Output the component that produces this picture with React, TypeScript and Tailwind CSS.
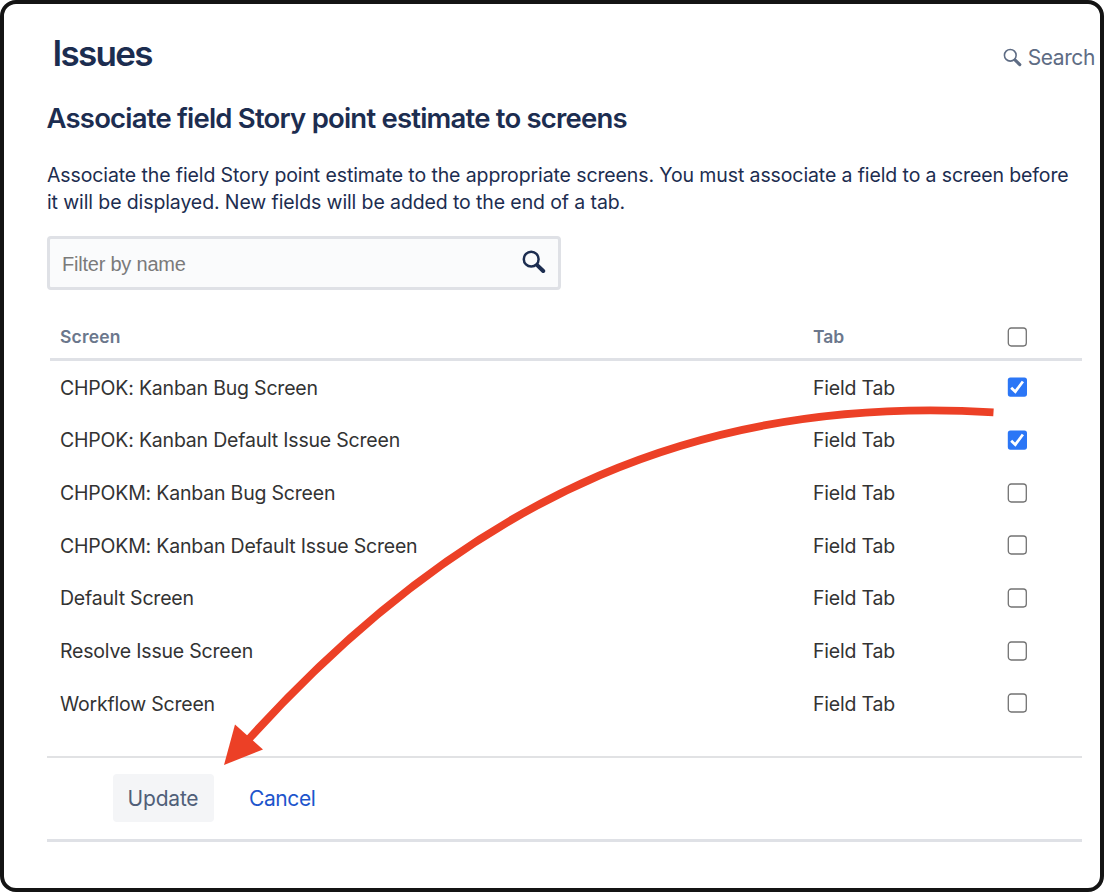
import { useState } from "react";

const rows = [
  { screen: "CHPOK: Kanban Bug Screen", checked: true },
  { screen: "CHPOK: Kanban Default Issue Screen", checked: true },
  { screen: "CHPOKM: Kanban Bug Screen", checked: false },
  { screen: "CHPOKM: Kanban Default Issue Screen", checked: false },
  { screen: "Default Screen", checked: false },
  { screen: "Resolve Issue Screen", checked: false },
  { screen: "Workflow Screen", checked: false },
];

function Checkbox({ checked, onChange, label }: { checked: boolean; onChange: () => void; label: string }) {
  return (
    <button type="button" role="checkbox" aria-checked={checked} aria-label={label} onClick={onChange} className="block h-5 w-5">
      <svg viewBox="0 0 20 20" className="h-5 w-5">
        {checked ? (
          <>
            <rect x="0.8" y="0.5" width="19.2" height="19.2" rx="2.6" fill="#2b76f6" />
            <path d="M4.2 10.7 8.300 14.700 15.900 4.500" fill="none" stroke="#fff" strokeWidth="2.8" />
          </>
        ) : (
          <rect x="1.3" y="1" width="18" height="18" rx="2.9" fill="#fff" stroke="#737373" strokeWidth="1.3" />
        )}
      </svg>
    </button>
  );
}

function Magnifier({ className, ring }: { className: string; ring: number }) {
  return (
    <svg viewBox="0 0 24 24" className={className} fill="none" stroke="currentColor">
      <circle cx="9.2" cy="9.2" r="7.4" strokeWidth={ring} />
      <path d="M15.4 15.4 21.2 21" strokeWidth="4" strokeLinecap="round" />
    </svg>
  );
}

export default function App() {
  const [state, setState] = useState(rows.map((r) => r.checked));
  const all = state.every(Boolean);
  const toggle = (i: number) => setState(state.map((v, k) => (k === i ? !v : v)));

  return (
    <div className="relative h-[892px] w-[1104px] overflow-hidden rounded-2xl border-4 border-[#141414] bg-white pl-[43px] font-['Inter',sans-serif] text-[#1c2d50]">
      <header className="flex h-[80px] items-start justify-between pr-[5px] pl-[5.5px] whitespace-nowrap">
        <h1 className="mt-[26px] text-[35px] leading-[46px] font-semibold tracking-[-1.7px]">Issues</h1>
        <div className="mt-[39px] flex items-center text-[21px] leading-[30px] tracking-[-0.4px] text-[#5e6c84]">
          <Magnifier className="mr-[6px] mb-[2px] h-[19px] w-[19px]" ring={2} />
          Search
        </div>
      </header>

      <main className="w-[1035px]">
        <h2 className="-ml-[0.5px] mt-[15px] text-[27.5px] leading-[38px] font-semibold tracking-[-0.79px] whitespace-nowrap">
          Associate field Story point estimate to screens
        </h2>
        <p className="mt-[25px] text-[19.5px] leading-[27px] tracking-[-0.11px] whitespace-nowrap">
          Associate the field Story point estimate to the appropriate screens. You must associate a field to a screen before
          <br />
          it will be displayed. New fields will be added to the end of a tab.
        </p>

        <div className="mt-[20px] flex h-[54px] w-[514px] items-center justify-between rounded-[4px] border-[3px] border-[#dfe1e6] bg-[#fafbfc] pr-[12px] pl-[12px] font-['Liberation_Sans',sans-serif] text-[20px] tracking-[-0.22px] text-[#7a7a7a]">
          <span className="mt-[2px]">Filter by name</span>
          <Magnifier className="mb-[2px] h-6 w-6 text-[#1c2d50]" ring={2.5} />
        </div>

        <div className="ml-[3px]">
          <div className="mt-[25px] flex h-[46px] items-center border-b-[3px] border-[#dfe1e6] pl-[10px] text-[17.5px] font-semibold text-[#6b778c]">
            <span className="w-[753px] pt-px tracking-[0.2px]">Screen</span>
            <span className="w-[194px] pt-px">Tab</span>
            <Checkbox checked={all} onChange={() => setState(state.map(() => !all))} label="Select all screens" />
          </div>
          {rows.map((r, i) => (
            <div key={r.screen} className="flex h-[52.65px] items-center pl-[10px] text-[19.5px] tracking-[-0.2px] text-[#333]">
              <span className="w-[753px] pt-[2px]">{r.screen}</span>
              <span className="w-[194px] pt-[2px]">Field Tab</span>
              <Checkbox checked={state[i]} onChange={() => toggle(i)} label={r.screen} />
            </div>
          ))}
        </div>

        <footer className="mt-[26.4px] flex h-[86px] items-center border-t-2 border-b-[3px] border-t-[#e1e2e4] border-b-[#dfe1e6] pl-[66px] text-[21px]">
          <button type="button" className="h-[48px] w-[101px] rounded-[4px] bg-[#f4f5f7] pr-px tracking-[-0.2px] text-[#505f79]">
            Update
          </button>
          <a href="#cancel" className="ml-[35px] tracking-[-0.4px] text-[#1d55cc]">
            Cancel
          </a>
        </footer>
      </main>

      <svg viewBox="0 0 1096 884" className="pointer-events-none absolute inset-0 h-[884px] w-[1096px]">
        <g transform="translate(-4 -4)">
          <path d="M993.500 412.300C710 395 475 488.500 248 740" fill="none" stroke="#ec4026" strokeWidth="7.800" />
          <path d="M224 765 235 724.500 263 749.500Z" fill="#ec4026" />
        </g>
      </svg>
    </div>
  );
}
